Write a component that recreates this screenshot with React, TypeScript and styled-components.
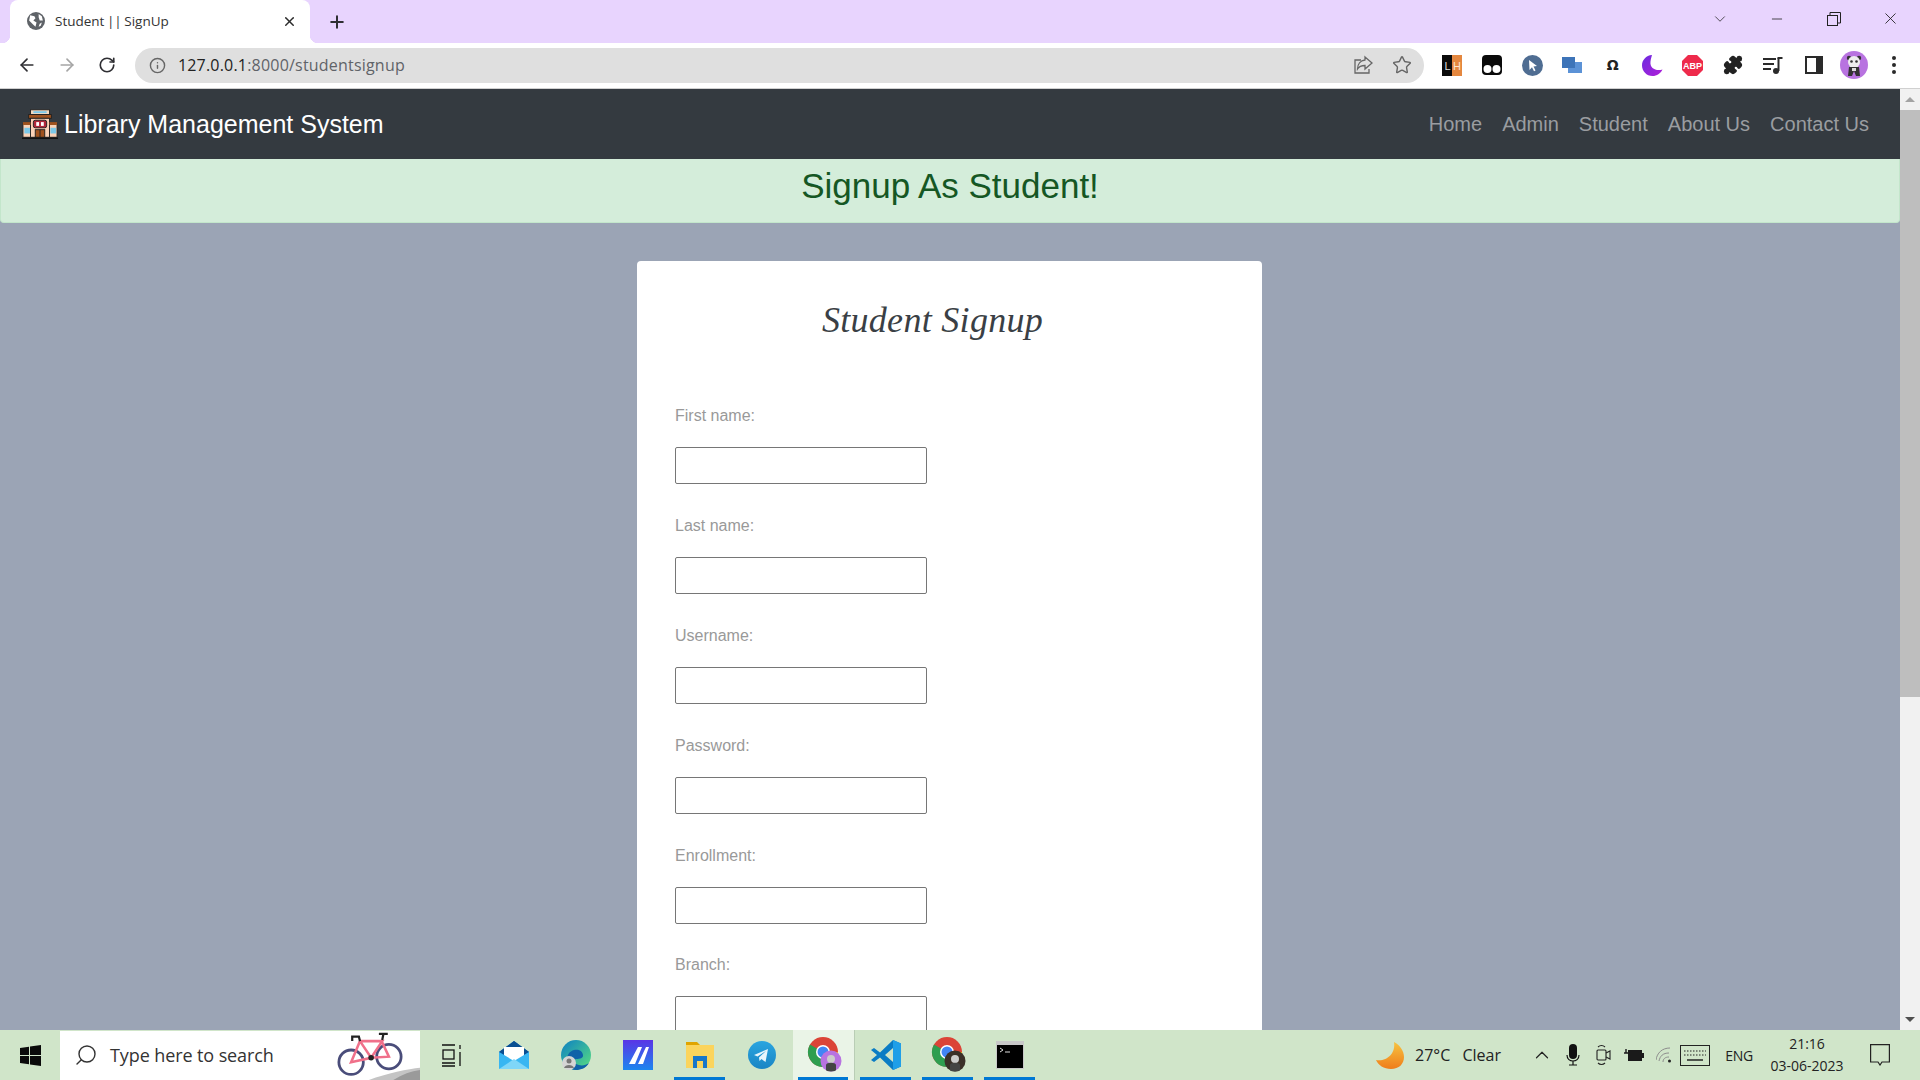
import React from 'react';
import styled, { createGlobalStyle } from 'styled-components';
import { ArrowLeft, ArrowRight, RotateCw, Plus, X, Minus, ChevronDown, ChevronUp, Info, Star, Puzzle, Search } from 'lucide-react';

const GlobalStyle = createGlobalStyle`
  html, body {
    margin: 0;
    height: 100%;
    overflow: hidden;
    font-family: "Liberation Sans", Arial, sans-serif;
  }
  * {
    box-sizing: border-box;
  }
`;

const Screen = styled.div`
  width: 1920px;
  height: 1080px;
  display: flex;
  flex-direction: column;
  overflow: hidden;
  background: #fff;
`;

/* browser chrome */
const TabStrip = styled.div`
  height: 43px;
  flex: none;
  background: #e8d4fe;
  display: flex;
  align-items: flex-end;
  padding-left: 10px;
`;

const Tab = styled.div`
  position: relative;
  width: 300px;
  height: 43px;
  background: #fff;
  border-radius: 8px 8px 0 0;
  display: flex;
  align-items: center;
  padding: 0 13px 1px 17px;
  gap: 10px;
  color: #2b2b2b;
  &::before,
  &::after {
    content: '';
    position: absolute;
    bottom: 0;
    width: 8px;
    height: 8px;
    background: radial-gradient(circle at 0 0, #e8d4fe 8px, #fff 8.5px);
  }
  &::before {
    left: -8px;
  }
  &::after {
    right: -8px;
    transform: scaleX(-1);
  }
`;

const TabTitle = styled.span`
  flex: 1;
  font-family: "Open Sans", sans-serif;
  font-size: 13.5px;
  word-spacing: -1px;
  color: #333;
`;

const NewTab = styled.div`
  width: 54px;
  height: 43px;
  display: flex;
  align-items: center;
  justify-content: center;
  color: #2f2f33;
`;

const WindowControls = styled.div`
  margin-left: auto;
  height: 43px;
  display: flex;
  color: #222;
  padding-right: 1px;
  padding-bottom: 6px;
`;

const WindowButton = styled.div`
  width: 57px;
  display: flex;
  align-items: center;
  justify-content: center;
`;

const Toolbar = styled.div`
  height: 46px;
  flex: none;
  background: #fff;
  border-bottom: 1px solid #d0d0d0;
  display: flex;
  align-items: center;
  padding: 0 6px 1px 7px;
`;

const NavButton = styled.div<{ $off?: boolean }>`
  width: 40px;
  height: 34px;
  display: flex;
  align-items: center;
  justify-content: center;
  color: ${p => (p.$off ? '#a5a5a5' : '#2f2f33')};
`;

const UrlBar = styled.div`
  width: 1290px;
  height: 35px;
  margin-left: 8px;
  background: #dfdfdf;
  border-radius: 18px;
  display: flex;
  align-items: center;
  padding: 0 12px 0 14px;
  color: #666;
`;

const UrlText = styled.div`
  flex: 1;
  margin-left: 12px;
  font-family: "Open Sans", sans-serif;
  font-size: 16px;
  letter-spacing: 0.2px;
  color: #5f6368;
  b {
    font-weight: 400;
    color: #222;
  }
`;

const UrlActions = styled.div`
  display: flex;
  align-items: center;
  gap: 19px;
  color: #666;
`;

const Extensions = styled.div`
  display: flex;
  align-items: center;
  margin-left: 8px;
`;

const ExtSlot = styled.div`
  width: 40.2px;
  height: 40px;
  display: flex;
  align-items: center;
  justify-content: center;
  color: #222;
`;

const OmegaGlyph = styled.span`
  font-family: "DejaVu Sans", sans-serif;
  font-size: 14px;
  font-weight: 700;
  color: #222;
`;

/* page */
const Viewport = styled.div`
  flex: 1;
  min-height: 0;
  display: flex;
`;

const Page = styled.div`
  flex: 1;
  min-width: 0;
  background: #9ba4b5;
  overflow: hidden;
`;

const Navbar = styled.nav`
  height: 70px;
  background: #343a40;
  display: flex;
  align-items: center;
  justify-content: space-between;
  padding: 0 23px 0 22px;
`;

const Brand = styled.a`
  display: flex;
  align-items: center;
  gap: 6px;
  font-size: 25px;
  color: #fff;
`;

const NavLinks = styled.div`
  display: flex;
  gap: 20px;
  padding-right: 8px;
`;

const NavLink = styled.a`
  font-size: 20px;
  color: #9a9da0;
`;

const Banner = styled.div`
  height: 64px;
  background: #d4edda;
  border: 1px solid #c3e6cb;
  border-top: 0;
  border-radius: 0 0 4px 4px;
  color: #155724;
  font-size: 35px;
  line-height: 54px;
  text-align: center;
`;

const Card = styled.section`
  width: 625px;
  margin: 38px auto 0;
  background: #fff;
  border-radius: 4px;
  padding: 37px 38px 0;
  position: relative;
  left: -.5px;
`;

const CardTitle = styled.h2`
  margin: 0 34px 62px 0;
  height: 44px;
  font-family: "Liberation Serif", serif;
  font-style: italic;
  font-weight: 400;
  font-size: 36px;
  line-height: 44px;
  letter-spacing: 0.3px;
  text-align: center;
  color: #3a3f45;
`;

const Field = styled.div`
  height: 109.9px;
  display: flex;
  flex-direction: column;
`;

const FieldLabel = styled.label`
  font-size: 16px;
  line-height: 24px;
  color: #999;
  margin-bottom: 19px;
`;

const FieldInput = styled.input`
  width: 252px;
  height: 37px;
  flex: none;
  border: 1px solid #767676;
  border-radius: 2px;
  background: #fff;
`;

const Scrollbar = styled.div`
  width: 20px;
  flex: none;
  background: #f1f1f1;
  display: flex;
  flex-direction: column;
  align-items: center;
`;

const ScrollArrow = styled.div<{ $down?: boolean }>`
  height: 21px;
  width: 100%;
  flex: none;
  display: flex;
  align-items: center;
  justify-content: center;
  margin-top: ${p => (p.$down ? 'auto' : '0')};
  &::before {
    content: '';
    border-left: 5px solid transparent;
    border-right: 5px solid transparent;
    ${p => (p.$down ? 'border-top: 5px solid #505050;' : 'border-bottom: 5px solid #a3a3a3;')}
  }
`;

const ScrollThumb = styled.div`
  width: 100%;
  height: 587px;
  background: #bebebe;
`;

/* taskbar */
const Taskbar = styled.footer`
  height: 50px;
  flex: none;
  background: #d0e5c9;
  display: flex;
  align-items: stretch;
  color: #1c1c1c;
`;

const StartButton = styled.div`
  width: 60px;
  display: flex;
  align-items: center;
  justify-content: center;
`;

const SearchBox = styled.div`
  width: 360px;
  height: 49px;
  margin-top: 1px;
  background: #fff;
  display: flex;
  align-items: center;
  padding: 0 0 2px 14px;
  gap: 12px;
  position: relative;
  overflow: hidden;
  font-family: "Open Sans", sans-serif;
  font-size: 18px;
  letter-spacing: -0.1px;
  color: #333;
`;

const BikeArt = styled.svg`
  position: absolute;
  right: 0;
  bottom: 0;
`;

const TaskIcons = styled.div`
  display: flex;
  margin-left: .5px;
`;

const TaskSlot = styled.div<{ $active?: boolean; $open?: boolean }>`
  width: 62px;
  display: flex;
  align-items: center;
  justify-content: center;
  position: relative;
  background: ${p => (p.$active ? '#eaf4e7' : 'transparent')};
  border-right: ${p => (p.$active ? '1px solid #b9cdb5' : '0')};
  &::after {
    content: '';
    display: ${p => (p.$open ? 'block' : 'none')};
    position: absolute;
    left: 5.5px;
    right: 5.5px;
    bottom: 0;
    height: 3px;
    background: #0078d4;
  }
`;

const Tray = styled.div`
  margin-left: auto;
  padding-right: 20px;
  display: flex;
  align-items: center;
  font-family: "Open Sans", sans-serif;
  font-size: 16px;
  color: #222;
`;

const Weather = styled.div`
  display: flex;
  align-items: center;
  gap: 11px;
  width: 151px;
`;

const WeatherText = styled.span`
  word-spacing: 8px;
`;

const TrayIcons = styled.div`
  display: flex;
  align-items: center;
`;

const TraySlot = styled.div`
  width: 30.5px;
  display: flex;
  align-items: center;
  justify-content: center;
`;

const LangText = styled.div`
  width: 46px;
  margin-left: 6px;
  text-align: center;
  font-size: 14px;
  letter-spacing: -0.3px;
`;

const Clock = styled.div`
  width: 90px;
  text-align: center;
  font-size: 14px;
  line-height: 22px;
  letter-spacing: 0;
`;

const Notify = styled.div`
  width: 40px;
  margin-left: 8px;
  display: flex;
  justify-content: center;
`;

/* drawings */
const GlobeIcon = () => (
  <svg width="18" height="18" viewBox="0 0 17 17">
    <circle cx="8.5" cy="8.5" r="8.5" fill="#5f6368" />
    <path d="M3 3l4 1 1 2-2 2 3 2-1 4-3-3-3-3zM11 2l3 2 1 4-3 0-1-3zM12 11l2-1-1 3-2 1z" fill="#fff" />
  </svg>
);

const ShareIcon = () => (
  <svg width="20" height="20" viewBox="0 0 20 20" fill="none" stroke="#666" strokeWidth="1.3">
    <path d="M8 5H2v13h14v-4" />
    <path d="M12 2l7 6-7 6v-3.500c-3.500 0-6 1-7.500 3.500 0-5 3-8.500 7.500-9z" />
  </svg>
);

const LhIcon = () => (
  <svg width="20" height="21" viewBox="0 0 20 21" fontFamily="Liberation Sans, sans-serif" fontSize="11">
    <rect width="10" height="21" fill="#0a0a0a" />
    <rect x="10" width="10" height="21" fill="#e4873f" />
    <text x="2.500" y="15" fill="#ddd">L</text>
    <text x="11" y="15" fill="#fbe4d0">H</text>
  </svg>
);

const TabbyIcon = () => (
  <svg width="20" height="20" viewBox="0 0 20 20">
    <rect width="20" height="20" rx="4" fill="#0a0a0a" />
    <circle cx="5.500" cy="14" r="4" fill="#fff" />
    <circle cx="14.500" cy="14" r="4" fill="#fff" />
  </svg>
);

const CursorIcon = () => (
  <svg width="21" height="21" viewBox="0 0 21 21">
    <circle cx="10.500" cy="10.500" r="10.500" fill="#4f6d92" />
    <path d="M7 5l8 6-3.500.5 2 4-1.500.7-2-4L7.500 15z" fill="#fff" />
  </svg>
);

const WindowsExtIcon = () => (
  <svg width="20" height="20" viewBox="0 0 20 20">
    <rect x="0" y="2" width="13" height="11" fill="#3d74b8" />
    <rect x="6" y="7" width="14" height="11" fill="#5b92d6" />
    <rect x="6" y="7" width="7" height="6" fill="#3d74b8" />
  </svg>
);

const MoonExtIcon = () => (
  <svg width="21" height="21" viewBox="0 0 21 21">
    <defs>
      <linearGradient id="moonExt" x1="0" y1="0" x2="1" y2="1">
        <stop offset="0" stopColor="#6b2be0" />
        <stop offset="1" stopColor="#b01fd8" />
      </linearGradient>
    </defs>
    <path d="M10 0C4 .5 0 5 0 10.500S4.500 21 10.500 21c4.500 0 8-2.500 10-6.500-6 2-13-1-12-8C8.800 4 9.500 2 10 0z" fill="url(#moonExt)" />
  </svg>
);

const AbpIcon = () => (
  <svg width="21" height="21" viewBox="0 0 21 21">
    <path d="M6 0h9l6 6v9l-6 6H6l-6-6V6z" fill="#ee2a4b" />
    <text x="10.500" y="14" textAnchor="middle" fill="#fff" fontSize="9" fontWeight="700" fontFamily="Liberation Sans, sans-serif">ABP</text>
  </svg>
);

const PlaylistIcon = () => (
  <svg width="20" height="18" viewBox="0 0 20 18" fill="#2a2a2a">
    <rect x="0" y="2" width="13" height="2" />
    <rect x="0" y="7" width="11" height="2" />
    <rect x="0" y="12" width="8" height="2" />
    <circle cx="13" cy="15" r="3" />
    <rect x="14.500" y="2" width="2" height="13" />
    <rect x="14.500" y="1" width="5" height="2" />
  </svg>
);

const SidePanelIcon = () => (
  <svg width="18" height="18" viewBox="0 0 18 18">
    <rect x="1" y="1" width="16" height="16" fill="#fff" stroke="#2a2a2a" strokeWidth="2" />
    <rect x="11" y="1" width="6" height="16" fill="#2a2a2a" />
  </svg>
);

const PandaAvatar = () => (
  <svg width="28" height="28" viewBox="0 0 28 28">
    <circle cx="14" cy="14" r="14" fill="#b873e0" />
    <circle cx="9" cy="7" r="2.200" fill="#333" />
    <circle cx="19" cy="7" r="2.200" fill="#333" />
    <circle cx="14" cy="11" r="6" fill="#eee" />
    <circle cx="11.500" cy="10.500" r="1.300" fill="#333" />
    <circle cx="16.500" cy="10.500" r="1.300" fill="#333" />
    <path d="M9 16h10l1 9h-4l-2-5-2 5H8z" fill="#333" />
    <rect x="12" y="17" width="4" height="3" fill="#ddd" />
  </svg>
);

const DotsIcon = () => (
  <svg width="4" height="18" viewBox="0 0 4 18" fill="#2a2a2a">
    <circle cx="2" cy="2" r="2" />
    <circle cx="2" cy="9" r="2" />
    <circle cx="2" cy="16" r="2" />
  </svg>
);

const RestoreIcon = () => (
  <svg width="14" height="14" viewBox="0 0 14 14" fill="none" stroke="#222" strokeWidth="1">
    <rect x="0.500" y="3.500" width="10" height="10" />
    <path d="M3 3V.5h10.500V11H11" />
  </svg>
);

const LibraryLogo = () => (
  <svg width="36" height="32" viewBox="0 0 38 32">
    <rect x="9" y="1" width="20" height="5" fill="#f4d9be" stroke="#222" />
    <rect x="12" y="2.500" width="14" height="2" fill="#7cc8e8" />
    <rect x="7" y="6" width="24" height="4" fill="#a0521e" stroke="#222" />
    <rect x="9" y="10" width="20" height="20" fill="#fbd3b8" stroke="#222" />
    <rect x="1" y="16" width="8" height="14" fill="#fbd3b8" stroke="#222" />
    <rect x="29" y="16" width="8" height="14" fill="#fbd3b8" stroke="#222" />
    <rect x="1" y="14" width="8" height="3" fill="#a0521e" />
    <rect x="29" y="14" width="8" height="3" fill="#a0521e" />
    <rect x="2.500" y="20" width="6" height="6" fill="#7cc8e8" />
    <rect x="30" y="20" width="6" height="6" fill="#7cc8e8" />
    <rect x="12" y="12" width="14" height="8" rx="2" fill="#b0283a" stroke="#222" />
    <rect x="15" y="14" width="3" height="4" fill="#fff" />
    <rect x="20" y="14" width="3" height="4" fill="#fff" />
    <rect x="14" y="22" width="10" height="8" fill="#a0521e" stroke="#222" />
    <path d="M19 22v8" stroke="#222" />
    <path d="M0 31h38" stroke="#111" strokeWidth="1.500" />
  </svg>
);

const WindowsLogo = () => (
  <svg width="21" height="21" viewBox="0 0 21 21" fill="#0a0a0a">
    <path d="M0 3l9-1.300V10H0zM10 1.500L21 0v10H10zM0 11h9v8.300L0 18zM10 11h11v10l-11-1.500z" />
  </svg>
);

const BikeDrawing = () => (
  <BikeArt width="100" height="50" viewBox="0 5 90 45">
    <path d="M44 50C60 44 80 40 90 39v11z" fill="#c4c4c4" />
    <path d="M66 50c8-5 16-8 24-9v9z" fill="#9a9a9a" />
    <circle cx="28" cy="34" r="11" fill="none" stroke="#4a4d7a" strokeWidth="2.500" />
    <circle cx="62" cy="29" r="11" fill="none" stroke="#4a4d7a" strokeWidth="2.500" />
    <path d="M28 34l8-19h20l-10 15zM36 15l10 15 16-1-7-15" fill="none" stroke="#f0708a" strokeWidth="2.300" />
    <path d="M56 14l1-5M53 8.500h8M36 15l-1-4h-6v4" fill="none" stroke="#222" strokeWidth="2" />
    <circle cx="46" cy="30" r="2.500" fill="#222" />
  </BikeArt>
);

const TaskViewIcon = () => (
  <svg width="20" height="23" viewBox="0 0 20 23" fill="none" stroke="#111" strokeWidth="1.300">
    <path d="M0 1h13M0 22h13M0 19h13" />
    <rect x="1" y="6" width="11" height="9" />
    <path d="M18 1v4M18 8v14" />
  </svg>
);

const MailIcon = () => (
  <svg width="30" height="28" viewBox="0 0 30 28">
    <path d="M15 0l15 11v17H0V11z" fill="#0f6cbd" />
    <path d="M15 0l15 11-15 9L0 11z" fill="#0a4f92" />
    <path d="M5 6h20v9l-10 6L5 15z" fill="#fff" />
    <path d="M0 11l15 9 15-9v17H0z" fill="#38b6f2" />
    <path d="M0 28l15-10 15 10z" fill="#7fd6f8" />
  </svg>
);

const EdgeIcon = () => (
  <svg width="30" height="30" viewBox="0 0 30 30">
    <defs>
      <linearGradient id="edgeTop" x1="0" y1="0" x2="1" y2="1">
        <stop offset="0" stopColor="#0c7fc4" />
        <stop offset="1" stopColor="#5ae07e" />
      </linearGradient>
    </defs>
    <circle cx="15" cy="15" r="15" fill="url(#edgeTop)" />
    <path d="M7 15c2-6 14-8 15 0 .5 3-3 4-7 4-3 0-3 3 0 5 4 2 9 2 13-1-3 5-8 7-13 7C7 30 3 22 7 15z" fill="#0f62a8" />
    <circle cx="8" cy="23" r="7" fill="#d5d5d5" />
    <circle cx="8" cy="21" r="2.500" fill="#777" />
    <path d="M3 28c1-4 9-4 10 0z" fill="#777" />
  </svg>
);

const PowerIcon = () => (
  <svg width="30" height="30" viewBox="0 0 30 30">
    <defs>
      <linearGradient id="pwr" x1="0" y1="0" x2="0" y2="1">
        <stop offset="0" stopColor="#5a35e6" />
        <stop offset="1" stopColor="#1c86ee" />
      </linearGradient>
    </defs>
    <rect width="30" height="30" fill="url(#pwr)" />
    <path d="M6 24L15 7h4l-7 17zM15 24l8-17h3l-6 17z" fill="#fff" />
  </svg>
);

const FolderIcon = () => (
  <svg width="28" height="26" viewBox="0 0 28 26">
    <path d="M0 0h11l3 3h-14z" fill="#e0a400" />
    <rect x="0" y="3" width="28" height="23" fill="#fbd45c" />
    <path d="M7 26V14h14v12h-4v-7h-6v7z" fill="#1877c9" />
  </svg>
);

const TelegramIcon = () => (
  <svg width="28" height="28" viewBox="0 0 28 28">
    <defs>
      <linearGradient id="tg" x1="0" y1="0" x2="0" y2="1">
        <stop offset="0" stopColor="#2aa5e0" />
        <stop offset="1" stopColor="#1a85c4" />
      </linearGradient>
    </defs>
    <circle cx="14" cy="14" r="14" fill="url(#tg)" />
    <path d="M6 14l14-6-2.500 13-4-3-2 2-.5-3.500L18 10l-8.500 5.500z" fill="#e8f5fc" />
  </svg>
);

const ChromeIcon = ({ badge, id }: { badge: string; id: string }) => (
  <svg width="37" height="36" viewBox="-3 0 37 36">
    <circle cx="15" cy="15" r="15" fill="#db4437" />
    <path d="M15 15L2 7.500A15 15 0 0 0 15 30l7-12z" fill="#2e9e4f" />
    <path d="M15 15h15A15 15 0 0 1 15 30z" fill="#f5c01f" />
    <circle cx="15" cy="15" r="7" fill="#fff" />
    <circle cx="15" cy="15" r="5.500" fill="#4285f4" />
    <clipPath id={id}>
      <circle cx="23" cy="24" r="10.500" />
    </clipPath>
    <circle cx="23" cy="24" r="10.500" fill={badge} />
    <g clipPath={`url(#${id})`}>
      <circle cx="23" cy="22" r="4" fill="#ccc" />
      <path d="M18 36v-8c0-3 10-3 10 0v8z" fill="#444" />
    </g>
  </svg>
);

const VsCodeIcon = () => (
  <svg width="30" height="30" viewBox="0 0 30 30">
    <path d="M22 0l8 3.500v23L22 30 9 17.500 3 22 0 20l6-5-6-5 3-2 6 4.500z" fill="#0a7cc4" />
    <path d="M22 0l8 3.500v23L22 30z" fill="#1f9fe8" />
    <path d="M22 8l-8 7 8 7z" fill="#d0e5c9" />
  </svg>
);

const TerminalIcon = () => (
  <svg width="28" height="28" viewBox="0 0 28 28">
    <rect width="28" height="28" fill="#c8c8c8" />
    <rect x="1" y="4" width="26" height="23" fill="#000" />
    <path d="M4 7l3 2-3 2M9 11h5" stroke="#ddd" fill="none" />
  </svg>
);

const MoonWeatherIcon = () => (
  <svg width="28" height="27" viewBox="0 0 28 27">
    <defs>
      <linearGradient id="moonW" x1="0" y1="0" x2="0" y2="1">
        <stop offset="0" stopColor="#f7c340" />
        <stop offset="1" stopColor="#ef7d1a" />
      </linearGradient>
    </defs>
    <path d="M18 0c6 3 10 9 10 15 0 7-5 12-13 12C8 27 2 23 0 18c10 2 20-6 18-18z" fill="url(#moonW)" />
  </svg>
);

const MicIcon = () => (
  <svg width="14" height="22" viewBox="0 0 14 22" fill="none" stroke="#111" strokeWidth="1.200">
    <rect x="3" y="0" width="8" height="15" rx="4" fill="#111" stroke="none" />
    <path d="M1 11c0 8 12 8 12 0M7 17v4M3 21h8" />
  </svg>
);

const CameraTrayIcon = () => (
  <svg width="15" height="22" viewBox="0 0 15 22" fill="none" stroke="#222" strokeWidth="1.100">
    <rect x="1" y="6" width="9" height="10" rx="1" />
    <path d="M10 9l4-2v8l-4-2M2 3c2-2 5-2 7 0M2 19c2 2 5 2 7 0" />
  </svg>
);

const BatteryIcon = () => (
  <svg width="20" height="14" viewBox="0 0 20 14">
    <rect x="4" y="2" width="14" height="11" fill="#1a1a1a" />
    <rect x="18" y="5" width="2" height="5" fill="#1a1a1a" />
    <path d="M0 5h5M2 1v4" stroke="#1a1a1a" strokeWidth="1.400" />
  </svg>
);

const WifiIcon = () => (
  <svg width="16" height="16" viewBox="0 0 16 16" fill="none" stroke="#8c8c8c" strokeWidth="1">
    <path d="M0 13C1 6 6 1 14 1M3 14c1-5 4-8 10-8M7 15c0-3 2-5 6-5" />
    <circle cx="13.500" cy="14" r="1.500" fill="#222" stroke="none" />
  </svg>
);

const KeyboardIcon = () => (
  <svg width="30" height="21" viewBox="0 0 30 21" fill="none" stroke="#222">
    <rect x="0.500" y="0.500" width="29" height="20" />
    <path d="M4 6h22M4 10h22" strokeDasharray="1.500 1.500" />
    <path d="M7 15h16" strokeWidth="1.500" />
  </svg>
);

const NotifyIcon = () => (
  <svg width="20" height="22" viewBox="0 0 20 22" fill="none" stroke="#222" strokeWidth="1.200">
    <path d="M.6.6h18.800v17.400H12l-2 3-2-3H.6z" />
  </svg>
);

const fields = ['First name:', 'Last name:', 'Username:', 'Password:', 'Enrollment:', 'Branch:'];
const links = ['Home', 'Admin', 'Student', 'About Us', 'Contact Us'];

export default function App() {
  return (
    <Screen>
      <GlobalStyle />
      <TabStrip>
        <Tab>
          <GlobeIcon />
          <TabTitle>Student || SignUp</TabTitle>
          <X size={15} strokeWidth={2.4} />
        </Tab>
        <NewTab>
          <Plus size={20} strokeWidth={2.4} />
        </NewTab>
        <WindowControls>
          <WindowButton><ChevronDown size={18} strokeWidth={1} /></WindowButton>
          <WindowButton><Minus size={16} strokeWidth={1.2} /></WindowButton>
          <WindowButton><RestoreIcon /></WindowButton>
          <WindowButton><X size={19} strokeWidth={1.1} /></WindowButton>
        </WindowControls>
      </TabStrip>
      <Toolbar>
        <NavButton><ArrowLeft size={20} /></NavButton>
        <NavButton $off><ArrowRight size={20} /></NavButton>
        <NavButton><RotateCw size={18} strokeWidth={2.2} /></NavButton>
        <UrlBar>
          <Info size={17} strokeWidth={2} />
          <UrlText><b>127.0.0.1</b>:8000/studentsignup</UrlText>
          <UrlActions>
            <ShareIcon />
            <Star size={20} strokeWidth={1.7} />
          </UrlActions>
        </UrlBar>
        <Extensions>
          <ExtSlot><LhIcon /></ExtSlot>
          <ExtSlot><TabbyIcon /></ExtSlot>
          <ExtSlot><CursorIcon /></ExtSlot>
          <ExtSlot><WindowsExtIcon /></ExtSlot>
          <ExtSlot><OmegaGlyph>Ω</OmegaGlyph></ExtSlot>
          <ExtSlot><MoonExtIcon /></ExtSlot>
          <ExtSlot><AbpIcon /></ExtSlot>
          <ExtSlot><Puzzle size={20} fill="#222" /></ExtSlot>
          <ExtSlot><PlaylistIcon /></ExtSlot>
          <ExtSlot><SidePanelIcon /></ExtSlot>
          <ExtSlot><PandaAvatar /></ExtSlot>
          <ExtSlot><DotsIcon /></ExtSlot>
        </Extensions>
      </Toolbar>
      <Viewport>
        <Page>
          <Navbar>
            <Brand>
              <LibraryLogo />
              Library Management System
            </Brand>
            <NavLinks>
              {links.map(link => (
                <NavLink key={link}>{link}</NavLink>
              ))}
            </NavLinks>
          </Navbar>
          <Banner>Signup As Student!</Banner>
          <Card>
            <CardTitle>Student Signup</CardTitle>
            {fields.map(field => (
              <Field key={field}>
                <FieldLabel>{field}</FieldLabel>
                <FieldInput />
              </Field>
            ))}
          </Card>
        </Page>
        <Scrollbar>
          <ScrollArrow />
          <ScrollThumb />
          <ScrollArrow $down />
        </Scrollbar>
      </Viewport>
      <Taskbar>
        <StartButton><WindowsLogo /></StartButton>
        <SearchBox>
          <Search size={24} strokeWidth={1.4} style={{ transform: 'scaleX(-1)' }} />
          Type here to search
          <BikeDrawing />
        </SearchBox>
        <TaskIcons>
          <TaskSlot><TaskViewIcon /></TaskSlot>
          <TaskSlot><MailIcon /></TaskSlot>
          <TaskSlot><EdgeIcon /></TaskSlot>
          <TaskSlot><PowerIcon /></TaskSlot>
          <TaskSlot $open><FolderIcon /></TaskSlot>
          <TaskSlot><TelegramIcon /></TaskSlot>
          <TaskSlot $open $active><ChromeIcon id="badgeA" badge="#b873e0" /></TaskSlot>
          <TaskSlot $open><VsCodeIcon /></TaskSlot>
          <TaskSlot $open><ChromeIcon id="badgeB" badge="#3a3028" /></TaskSlot>
          <TaskSlot $open><TerminalIcon /></TaskSlot>
        </TaskIcons>
        <Tray>
          <Weather>
            <MoonWeatherIcon />
            <WeatherText>27°C Clear</WeatherText>
          </Weather>
          <TrayIcons>
            <TraySlot><ChevronUp size={22} strokeWidth={1.3} /></TraySlot>
            <TraySlot><MicIcon /></TraySlot>
            <TraySlot><CameraTrayIcon /></TraySlot>
            <TraySlot><BatteryIcon /></TraySlot>
            <TraySlot><WifiIcon /></TraySlot>
            <TraySlot><KeyboardIcon /></TraySlot>
          </TrayIcons>
          <LangText>ENG</LangText>
          <Clock>21:16<br />03-06-2023</Clock>
          <Notify><NotifyIcon /></Notify>
        </Tray>
      </Taskbar>
    </Screen>
  );
}
